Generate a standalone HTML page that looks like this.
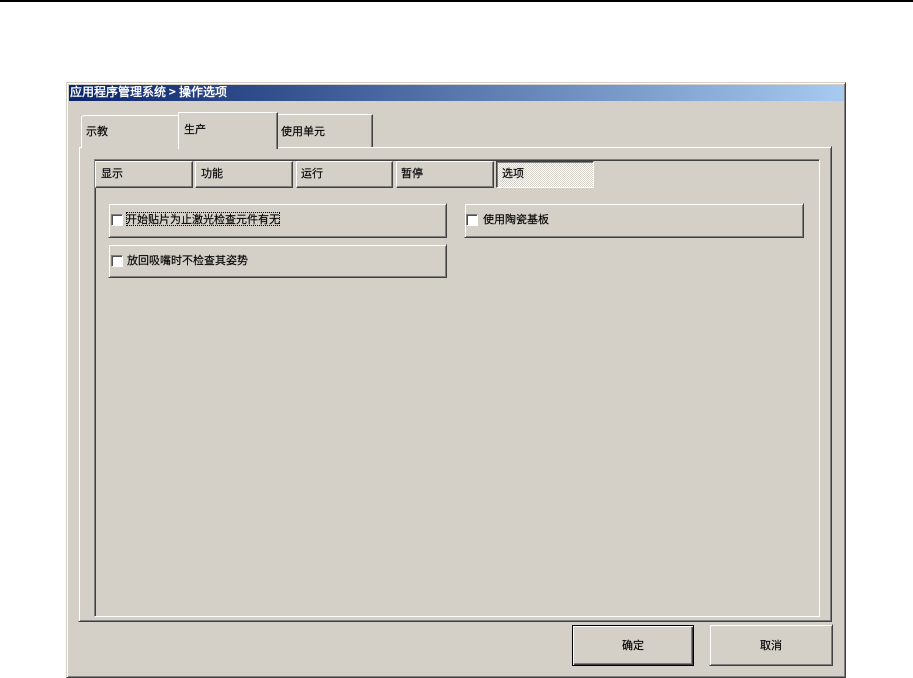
<!DOCTYPE html>
<html><head><meta charset="utf-8">
<style>
html,body{margin:0;padding:0;background:#fff;width:913px;height:678px;overflow:hidden}
*{box-sizing:border-box}
body{position:relative;font:11px/14px "WenQuanYi Zen Hei","Noto Sans CJK SC",sans-serif;color:#000}
.a{position:absolute}
.t{position:absolute;white-space:nowrap;-webkit-text-stroke:.15px #000}
.r{position:absolute;background:#d4d0c8;border:1px solid;border-color:#d4d0c8 #404040 #404040 #d4d0c8;box-shadow:inset 1px 1px 0 #fff,inset -1px -1px 0 #808080}
.s{position:absolute;background:#d4d0c8;border:1px solid;border-color:#fff #404040 #404040 #fff;box-shadow:inset -1px -1px 0 #808080}
.c{position:absolute;width:12px;height:12px;background:#fff;border:1px solid;border-color:#808080 #fff #fff #808080;box-shadow:inset 1px 1px 0 #505050}
</style></head><body>
<div class="a" style="left:0;top:0;width:913px;height:2px;background:#000"></div>

<div class="r" style="left:66px;top:82px;width:780px;height:596px"></div>
<div class="a" style="left:69px;top:85px;width:775px;height:16px;background:linear-gradient(90deg,#0a246a,#a6caf0)"></div>
<div class="t" style="left:70px;top:85px;color:#fff;font-size:12px;-webkit-text-stroke:.4px #fff">应用程序管理系统</div>
<div class="t" style="left:169px;top:85px;color:#fff;font-size:12px;-webkit-text-stroke:.4px #fff">&gt;</div>
<div class="t" style="left:179px;top:85px;color:#fff;font-size:12px;-webkit-text-stroke:.4px #fff">操作选项</div>

<!-- outer tab pane -->
<div class="r" style="left:78px;top:146px;width:754px;height:476px"></div>
<!-- main tabs -->
<div class="a" style="left:81px;top:115px;width:97px;height:33px;background:#d4d0c8;border:solid;border-width:1px 0 0 1px;border-color:#fff;border-top-left-radius:3px"></div>
<div class="t" style="left:86px;top:124px">示教</div>
<div class="a" style="left:277px;top:114px;width:96px;height:33px;background:#d4d0c8;border-top:1px solid #fff;border-right:1px solid #404040;box-shadow:inset -1px 0 0 #808080"></div>
<div class="t" style="left:281px;top:124px">使用单元</div>
<div class="a" style="left:178px;top:112px;width:100px;height:37px;background:#d4d0c8;border:solid;border-width:1px 1px 0 1px;border-color:#fff #404040 #fff #fff;box-shadow:inset -1px 0 0 #808080"></div>
<div class="t" style="left:184px;top:122px">生产</div>

<!-- inner pane -->
<div class="a" style="left:94px;top:159px;width:726px;height:458px;border:1px solid;border-color:#808080 #fff #fff #808080;box-shadow:inset 1px 1px 0 #404040"></div>

<!-- sub tabs -->
<div class="s" style="left:95px;top:161px;width:98px;height:27px"></div><div class="t" style="left:101px;top:166px">显示</div>
<div class="s" style="left:195px;top:161px;width:98px;height:27px"></div><div class="t" style="left:201px;top:166px">功能</div>
<div class="s" style="left:296px;top:161px;width:97px;height:27px"></div><div class="t" style="left:301px;top:166px">运行</div>
<div class="s" style="left:396px;top:161px;width:98px;height:27px"></div><div class="t" style="left:401px;top:166px">暂停</div>
<div class="a" style="left:496px;top:161px;width:98px;height:27px;border:1px solid;border-color:#404040 #fff #fff #404040;box-shadow:inset 1px 1px 0 #808080;background-color:#e6e4e0;background-image:repeating-conic-gradient(#d4d0c8 0 25%,#fff 0 50%);background-size:2px 2px"></div>
<div class="t" style="left:502px;top:166px;background:#e6e4e0">选项</div>

<!-- option buttons -->
<div class="r" style="left:108px;top:203px;width:339px;height:35px"></div>
<div class="c" style="left:111px;top:214px"></div>
<div class="t" style="left:126px;top:212px;width:154px;outline:1px dotted #000;outline-offset:-1px">开始贴片为止激光检查元件有无</div>
<div class="r" style="left:108px;top:244px;width:339px;height:34px"></div>
<div class="c" style="left:111px;top:255px"></div>
<div class="t" style="left:127px;top:253px">放回吸嘴时不检查其姿势</div>
<div class="r" style="left:464px;top:203px;width:340px;height:35px"></div>
<div class="c" style="left:466px;top:214px"></div>
<div class="t" style="left:483px;top:212px">使用陶瓷基板</div>

<!-- bottom buttons -->
<div class="a" style="left:572px;top:625px;width:122px;height:41px;background:#d4d0c8;border:1px solid #000;box-shadow:inset 1px 1px 0 #fff,inset -1px -1px 0 #404040,inset -2px -2px 0 #808080"></div>
<div class="t" style="left:622px;top:638px">确定</div>
<div class="r" style="left:709px;top:624px;width:124px;height:42px"></div>
<div class="t" style="left:760px;top:638px">取消</div>
</body></html>
